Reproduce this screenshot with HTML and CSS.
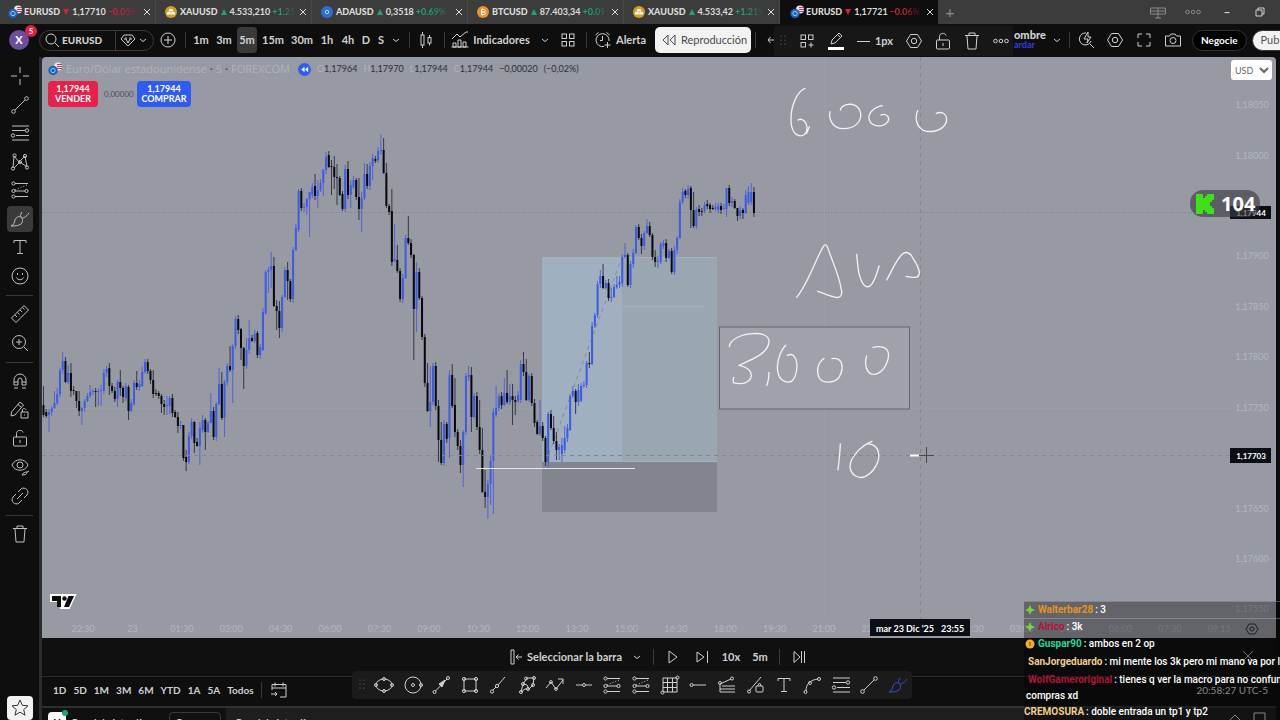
FILE: index.html
```html
<!DOCTYPE html>
<html lang="es">
<head>
    <meta charset="UTF-8">
    <meta name="viewport" content="width=device-width, initial-scale=1.0">
    <title>EURUSD 1,17721</title>
    <link rel="stylesheet" href="styles.css">
</head>
<body>
    <!-- icons -->
    <svg class="sprite" aria-hidden="true">
        <symbol id="i-cross" viewBox="0 0 20 20"><path d="M10 1v6M10 13v6M1 10h6M13 10h6"/></symbol>
        <symbol id="i-line" viewBox="0 0 20 20"><circle cx="3.500" cy="16.500" r="1.800"/><circle cx="16.500" cy="3.500" r="1.800"/><path d="M5 15L15 5"/></symbol>
        <symbol id="i-fib" viewBox="0 0 20 20"><path d="M2 3h17M2 7.500h13M6 12.500h13M2 17h17"/><circle cx="17" cy="7.500" r="1.700"/><circle cx="3" cy="12.500" r="1.700"/></symbol>
        <symbol id="i-pattern" viewBox="0 0 20 20"><path d="M3 16L4 4l5 6 6-6 2 11-7-5-6 6"/><circle cx="3" cy="16.500" r="1.600"/><circle cx="4.500" cy="3.500" r="1.600"/><circle cx="10" cy="10" r="1.500"/><circle cx="15" cy="4" r="1.600"/><circle cx="17" cy="15.500" r="1.600"/></symbol>
        <symbol id="i-proj" viewBox="0 0 20 20"><path d="M5 3.500h13M5 11h10M5 16.500h13"/><path stroke-dasharray="1 2" d="M5 10l12-5"/><circle cx="3.500" cy="3.500" r="1.600"/><circle cx="3.500" cy="11" r="1.600"/><circle cx="3.500" cy="16.500" r="1.600"/><circle cx="16.500" cy="11" r="1.600"/></symbol>
        <symbol id="i-brush" viewBox="0 0 20 20"><path d="M1 17c3-1 3-3 4-6 1-3 4-4 6-3 2 2 2 5 0 7-3 2-6 2-10 2zM11 8c-1-2 0-4 1-5M12 9c2 0 4-1 7-5"/></symbol>
        <symbol id="i-text" viewBox="0 0 20 20"><path d="M4 6V3.500h12V6M10 3.500v13M7 16.500h6"/></symbol>
        <symbol id="i-smile" viewBox="0 0 20 20"><circle cx="10" cy="10" r="8"/><path d="M6.500 11.500c1 3 6 3 7 0M7.500 7v2M12.500 7v2"/></symbol>
        <symbol id="i-ruler" viewBox="0 0 20 20"><path d="M1.500 14L14 1.500l4.500 4.500L6 18.500zM5 11l2 2M7.500 8.500l2 2M10 6l2 2M12.500 3.500l2 2"/></symbol>
        <symbol id="i-zoom" viewBox="0 0 20 20"><circle cx="9" cy="9" r="6.500"/><path d="M9 6v6M6 9h6M14 14l4 4"/></symbol>
        <symbol id="i-magnet" viewBox="0 0 20 20"><path d="M4 14V9a6 6 0 0 1 12 0v5h-4V9a2 2 0 0 0-4 0v5zM4 11h4M12 11h4M5 16v2M7 16v2M13 16v2M15 16v2"/></symbol>
        <symbol id="i-penlock" viewBox="0 0 20 20"><path d="M1.500 12L10 2l3.500 3L5 15l-4 1zM8 4.500l3.500 3M11 12h7v6h-7zM12.500 12v-2c0-2 3-2 3.500 0M14.500 14.500v1"/></symbol>
        <symbol id="i-lock" viewBox="0 0 20 20"><rect x="3.500" y="9" width="13" height="9" rx="1"/><path d="M6.500 9V5.500c0-4 6-4 6.500-1M10 12v3"/></symbol>
        <symbol id="i-eye" viewBox="0 0 20 20"><path d="M2 8c3-7 13-7 16 0-3 7-13 7-16 0z"/><circle cx="10" cy="8" r="3"/><path d="M12 18c2 0 5 0 5-3l2-1M12 18c1-2 3-3 5-3"/></symbol>
        <symbol id="i-link" viewBox="0 0 20 20"><path d="M8 6l3-3c4-3 9 2 6 6l-3 3M12 14l-3 3c-4 3-9-2-6-6l3-3M7 13l6-6"/></symbol>
        <symbol id="i-trash" viewBox="0 0 20 20"><path d="M3 4.500h14M7 4V2h6v2M5 5l1 13h8l1-13"/></symbol>
        <symbol id="i-star" viewBox="0 0 20 20"><path d="M10 2l2.300 5.300 5.700.5-4.300 3.800 1.300 5.600-5-3-5 3 1.300-5.600L2 7.800l5.700-.5z"/></symbol>
        <symbol id="i-plus" viewBox="0 0 20 20"><circle cx="10" cy="10" r="7"/><path d="M10 6v8M6 10h8"/></symbol>
        <symbol id="i-search" viewBox="0 0 20 20"><circle cx="9" cy="9" r="5"/><path d="M12.500 12.500L17 17"/></symbol>
        <symbol id="i-gem" viewBox="0 0 20 20"><path d="M6 5h8l3 4-7 7-7-7zM6 9l2 0 2 4 2-4 2 0M8 7v2M12 7v2"/></symbol>
        <symbol id="i-chev" viewBox="0 0 10 10"><path d="M2 4l3 2.500L8 4"/></symbol>
        <symbol id="i-candles" viewBox="0 0 20 20"><path d="M6.500 2v3M6.500 15v3M13.500 5v2.500M13.500 13v2.500"/><rect x="5" y="5" width="3" height="10"/><rect x="12" y="7.500" width="3" height="5.500"/></symbol>
        <symbol id="i-indic" viewBox="0 0 20 20"><path d="M3 17v-4h3v4zM8 17v-7h3v7zM13 17v-5h3v5zM1.500 17h17M2 9l5-5 3 3 6-5h2"/></symbol>
        <symbol id="i-grid" viewBox="0 0 20 20"><rect x="4" y="4" width="4.500" height="4.500"/><rect x="11.500" y="4" width="4.500" height="4.500"/><rect x="4" y="11.500" width="4.500" height="4.500"/><rect x="11.500" y="11.500" width="4.500" height="4.500"/></symbol>
        <symbol id="i-gridplus" viewBox="0 0 20 20"><rect x="4" y="4" width="4.500" height="4.500"/><rect x="11.500" y="4" width="4.500" height="4.500"/><rect x="4" y="11.500" width="4.500" height="4.500"/><path d="M14 11.500v5M11.500 14h5"/></symbol>
        <symbol id="i-alarm" viewBox="0 0 20 20"><path d="M11 16.500A6.500 6.500 0 1 1 16 11M9.500 6v4.500H7M2.500 5l3-2.500M13.500 2.500l3 2.500M14.500 12v6M11.500 15h6"/></symbol>
        <symbol id="i-rewind" viewBox="0 0 20 20"><path d="M9 5v10l-5-5zM16 5v10l-5-5z"/></symbol>
        <symbol id="i-back" viewBox="0 0 10 10"><path d="M4.500 2L2 5l2.500 3M2 5h7"/></symbol>
        <symbol id="i-drag" viewBox="0 0 10 14"><path stroke-dasharray="1.500 2.500" d="M3 1.500v12M7 1.500v12"/></symbol>
        <symbol id="i-pencil" viewBox="0 0 20 20"><path d="M5 13l1-4 7-7 3 3-7 7zM12 4l3 3"/><path class="thick" d="M2 17.500h16"/></symbol>
        <symbol id="i-hex" viewBox="0 0 20 20"><path d="M6.500 3.500h7l4 6.500-4 6.500h-7L2.500 10z"/><circle cx="10" cy="10" r="2.700"/></symbol>
        <symbol id="i-more" viewBox="0 0 20 20"><circle cx="4.500" cy="10" r="1.800"/><circle cx="10" cy="10" r="1.800"/><circle cx="15.500" cy="10" r="1.800"/></symbol>
        <symbol id="i-flash" viewBox="0 0 20 20"><path d="M10 3a6 6 0 1 0 5 8M14 14l4 4M12 2L8 9h4l-1 4 4-6h-3z"/></symbol>
        <symbol id="i-full" viewBox="0 0 20 20"><path d="M4 8V4h4M12 4h4v4M16 12v4h-4M8 16H4v-4"/></symbol>
        <symbol id="i-camera" viewBox="0 0 20 20"><path d="M2.500 6h4l1.500-2h4l1.500 2h4v10h-15z"/><circle cx="10" cy="10.500" r="3"/></symbol>
        <symbol id="i-screens" viewBox="0 0 20 20"><path d="M2.500 6h15v6h-15zM10 6v10M7 16h6M2.500 9h15"/></symbol>
        <symbol id="i-bar" viewBox="0 0 14 16"><path d="M2 1h3v14H2zM7 8h6M9.500 5.500L7 8l2.500 2.500"/></symbol>
        <symbol id="i-play" viewBox="0 0 20 20"><path d="M6 4v12l8-6z"/></symbol>
        <symbol id="i-step" viewBox="0 0 20 20"><path d="M5 5v10l7-5zM15.500 4v12"/></symbol>
        <symbol id="i-end" viewBox="0 0 20 20"><path d="M5 4.500v11l6-5.500zM12.500 4v12M15.500 4v12"/></symbol>
        <symbol id="i-cal" viewBox="0 0 20 20"><path d="M3 10V4.500h14V17H11M3 8h14M6 2.500v4M14 2.500v4M2 14h6M6 12l2 2-2 2"/></symbol>
        <symbol id="i-ellipse" viewBox="0 0 20 20"><ellipse cx="10" cy="10" rx="8" ry="6"/><circle cx="2" cy="10" r="1.500"/><circle cx="18" cy="10" r="1.500"/><circle cx="10" cy="4" r="1.500"/><circle cx="10" cy="16" r="1.500"/></symbol>
        <symbol id="i-circle" viewBox="0 0 20 20"><circle cx="10" cy="10" r="8"/><circle cx="10" cy="10" r="1.500"/><circle cx="18" cy="10" r="1.500"/></symbol>
        <symbol id="i-arrow" viewBox="0 0 20 20"><circle cx="3.500" cy="17" r="1.500"/><circle cx="17" cy="3" r="1.500"/><path d="M4.500 16L16 4"/><path class="solid" d="M14 5l-6 4 3 3z"/></symbol>
        <symbol id="i-rect" viewBox="0 0 20 20"><path d="M4 4h12v12H4z"/><circle cx="4" cy="4" r="1.600"/><circle cx="16" cy="4" r="1.600"/><circle cx="4" cy="16" r="1.600"/><circle cx="16" cy="16" r="1.600"/></symbol>
        <symbol id="i-ray" viewBox="0 0 20 20"><circle cx="4" cy="16.500" r="1.600"/><circle cx="9" cy="11" r="1.600"/><path d="M5 15l3-3M10 10l7-8"/></symbol>
        <symbol id="i-poly" viewBox="0 0 20 20"><path d="M4 17l2-8 4 1 2 4-4 0-4 3M6 9l4-6 7 0-1 7-4 4"/><circle cx="4" cy="17" r="1.500"/><circle cx="6" cy="9" r="1.500"/><circle cx="9" cy="3.500" r="1.500"/><circle cx="17" cy="3" r="1.500"/><circle cx="16" cy="10" r="1.500"/><circle cx="11" cy="14" r="1.500"/></symbol>
        <symbol id="i-zigzag" viewBox="0 0 20 20"><path d="M1 13l5-6 5 7 7-9M13 4h5v5"/><circle cx="6" cy="7" r="1.400"/><circle cx="11" cy="14" r="1.400"/></symbol>
        <symbol id="i-hline" viewBox="0 0 20 20"><path d="M2 10h6.500M11.500 10H18"/><circle cx="10" cy="10" r="1.500"/></symbol>
        <symbol id="i-gann" viewBox="0 0 20 20"><path d="M3 3h14v14H3zM7.500 3v14M12.500 3v14M3 7.500h14M3 12.500h14"/><circle cx="2.500" cy="17.500" r="1.500"/><circle cx="17.500" cy="2.500" r="1.500"/></symbol>
        <symbol id="i-hray" viewBox="0 0 20 20"><path d="M5 10h13"/><circle cx="3.500" cy="10" r="1.500"/></symbol>
        <symbol id="i-fan" viewBox="0 0 20 20"><path d="M3 9l11-5M3 9v8M5 11h13M3 14h15M3 17h15"/><circle cx="3" cy="8" r="1.500"/><circle cx="15" cy="3.500" r="1.500"/></symbol>
        <symbol id="i-lineshape" viewBox="0 0 20 20"><path d="M4 16L16 2"/><circle cx="4" cy="16.500" r="1.500"/><rect x="11" y="11" width="7" height="6" rx="1"/><path d="M12.500 11l2-3 2 3"/></symbol>
        <symbol id="i-arc" viewBox="0 0 20 20"><path d="M4 16c0-7 4-11 12-12"/><circle cx="3.500" cy="17" r="1.500"/><circle cx="8" cy="8" r="1.500"/><circle cx="17" cy="4" r="1.500"/></symbol>
        <symbol id="f-eu" viewBox="0 0 14 14"><g stroke="none"><circle cx="10" cy="4.500" r="4" fill="#e8e8f0"/><path fill="#c23b50" d="M9 2h5v1H9zM9 4h5v1H9zM9 6h5v1H9z"/><circle cx="5" cy="8.500" r="4.700" fill="#1d62b5"/></g><circle cx="5" cy="8.500" r="2.200" stroke="#8ecbff"/></symbol>
        <symbol id="f-gold" viewBox="0 0 14 14"><g stroke="none"><circle cx="7" cy="7" r="6" fill="#d3a021"/><path fill="#fff" d="M5.500 4h3l1 2.500h-5zM3.500 7h3l.5 2.500H2.500zM7.500 7h3l1 2.500H7z"/></g></symbol>
        <symbol id="f-ada" viewBox="0 0 14 14"><circle cx="7" cy="7" r="6" fill="#2a6fd6" stroke="none"/><circle cx="7" cy="7" r="1.700" stroke="#bcd6ff"/></symbol>
        <symbol id="f-btc" viewBox="0 0 14 14"><circle cx="7" cy="7" r="6" fill="#f0902a" stroke="none"/><path stroke="#fff" d="M5.500 4.500h2c2 0 2 2.500 0 2.500h-2zM5.500 7h2.500c2 0 2 2.500 0 2.500H5.500zM6.500 3.500v1M6.500 9.500v1"/></symbol>
    </svg>

    <!-- tabs -->
    <header class="tabs">
        <div class="tab"><svg class="flag"><use href="#f-eu"/></svg><b>EURUSD</b><svg class="tri down" viewBox="0 0 8 8"><path d="M1 1h6L4 7z"/></svg><span>1,17710</span><em class="down">−0.05%</em><button aria-label="Cerrar"><svg class="x" viewBox="0 0 8 8"><path d="M1 1l6 6M7 1L1 7"/></svg></button></div>
        <div class="tab"><svg class="flag"><use href="#f-gold"/></svg><b>XAUUSD</b><svg class="tri up" viewBox="0 0 8 8"><path d="M4 1l3 6H1z"/></svg><span>4.533,210</span><em class="up">+1.25%</em><button aria-label="Cerrar"><svg class="x" viewBox="0 0 8 8"><path d="M1 1l6 6M7 1L1 7"/></svg></button></div>
        <div class="tab"><svg class="flag"><use href="#f-ada"/></svg><b>ADAUSD</b><svg class="tri up" viewBox="0 0 8 8"><path d="M4 1l3 6H1z"/></svg><span>0,3518</span><em class="up">+0.69% /</em><button aria-label="Cerrar"><svg class="x" viewBox="0 0 8 8"><path d="M1 1l6 6M7 1L1 7"/></svg></button></div>
        <div class="tab"><svg class="flag"><use href="#f-btc"/></svg><b>BTCUSD</b><svg class="tri up" viewBox="0 0 8 8"><path d="M4 1l3 6H1z"/></svg><span>87.403,34</span><em class="up">+0.09%</em><button aria-label="Cerrar"><svg class="x" viewBox="0 0 8 8"><path d="M1 1l6 6M7 1L1 7"/></svg></button></div>
        <div class="tab"><svg class="flag"><use href="#f-gold"/></svg><b>XAUUSD</b><svg class="tri up" viewBox="0 0 8 8"><path d="M4 1l3 6H1z"/></svg><span>4.533,42</span><em class="up">+1.21%</em><button aria-label="Cerrar"><svg class="x" viewBox="0 0 8 8"><path d="M1 1l6 6M7 1L1 7"/></svg></button></div>
        <div class="tab active"><svg class="flag"><use href="#f-eu"/></svg><b>EURUSD</b><svg class="tri down" viewBox="0 0 8 8"><path d="M1 1h6L4 7z"/></svg><span>1,17721</span><em class="down">−0.06%</em><button aria-label="Cerrar"><svg class="x" viewBox="0 0 8 8"><path d="M1 1l6 6M7 1L1 7"/></svg></button></div>
        <button class="newtab" aria-label="Nueva pestaña">+</button>
        <div class="window">
            <svg class="ico dim"><use href="#i-screens"/></svg>
            <svg class="ico dim"><use href="#i-more"/></svg>
            <button aria-label="Minimizar">−</button>
            <button aria-label="Restaurar"><svg class="restore" viewBox="0 0 10 10"><path d="M1 3h6v6H1zM3 3V1h6v6H7"/></svg></button>
        </div>
    </header>

    <!-- toolbar -->
    <nav class="toolbar">
        <button class="avatar">X<span>5</span></button>
        <div class="search">
            <button><svg class="ico"><use href="#i-search"/></svg><b>EURUSD</b></button>
            <button class="gem" aria-label="Lista"><svg class="ico"><use href="#i-gem"/></svg><svg class="chev"><use href="#i-chev"/></svg></button>
        </div>
        <button class="tool" aria-label="Comparar"><svg class="ico"><use href="#i-plus"/></svg></button>
        <div class="sep first"></div>
        <div class="intervals">
            <button>1m</button>
            <button>3m</button>
            <button class="on">5m</button>
            <button class="wide">15m</button>
            <button class="wide">30m</button>
            <button class="slim">1h</button>
            <button class="slim">4h</button>
            <button class="one">D</button>
            <button class="one">S</button>
            <button class="one" aria-label="Más"><svg class="chev"><use href="#i-chev"/></svg></button>
        </div>
        <div class="sep"></div>
        <button class="tool candle" aria-label="Velas"><svg class="ico"><use href="#i-candles"/></svg></button>
        <div class="sep"></div>
        <button class="indic"><svg class="ico"><use href="#i-indic"/></svg>Indicadores</button>
        <button class="tool slim" aria-label="Favoritos"><svg class="chev"><use href="#i-chev"/></svg></button>
        <button class="tool layout" aria-label="Plantillas"><svg class="ico"><use href="#i-grid"/></svg></button>
        <div class="sep"></div>
        <button class="alert"><svg class="ico"><use href="#i-alarm"/></svg>Alerta</button>
        <button class="replaybtn"><svg class="ico"><use href="#i-rewind"/></svg>Reproducción</button>
        <div class="sep"></div>
        <button class="tool slim undo" aria-label="Deshacer"><svg class="chev"><use href="#i-back"/></svg></button>

        <div class="right">
            <button class="name"><b>ombre</b><small>ardar</small></button>
            <button class="tool slim" aria-label="Diseños"><svg class="chev"><use href="#i-chev"/></svg></button>
            <div class="sep"></div>
            <button class="tool" aria-label="Búsqueda rápida"><svg class="ico"><use href="#i-flash"/></svg></button>
            <button class="tool" aria-label="Ajustes"><svg class="ico"><use href="#i-hex"/></svg></button>
            <button class="tool" aria-label="Pantalla completa"><svg class="ico"><use href="#i-full"/></svg></button>
            <button class="tool" aria-label="Captura"><svg class="ico"><use href="#i-camera"/></svg></button>
            <button class="pill">Negocie</button>
            <button class="pill white">Publicar</button>
        </div>

        <!-- floating properties of the drawing -->
        <div class="props">
            <svg class="drag"><use href="#i-drag"/></svg>
            <button aria-label="Plantilla"><svg class="ico"><use href="#i-gridplus"/></svg></button>
            <button aria-label="Color"><svg class="ico"><use href="#i-pencil"/></svg></button>
            <button class="width">1px</button>
            <button aria-label="Ajustes"><svg class="ico"><use href="#i-hex"/></svg></button>
            <button aria-label="Bloquear"><svg class="ico"><use href="#i-lock"/></svg></button>
            <button aria-label="Eliminar"><svg class="ico"><use href="#i-trash"/></svg></button>
            <button aria-label="Más"><svg class="ico"><use href="#i-more"/></svg></button>
        </div>
    </nav>

    <div class="body">
        <aside class="side">
            <div class="g8">
                <button aria-label="Cursor"><svg class="ico"><use href="#i-cross"/></svg></button>
                <button aria-label="Línea"><svg class="ico"><use href="#i-line"/></svg></button>
                <button aria-label="Fibonacci"><svg class="ico"><use href="#i-fib"/></svg></button>
                <button aria-label="Patrones"><svg class="ico"><use href="#i-pattern"/></svg></button>
                <button aria-label="Proyección"><svg class="ico"><use href="#i-proj"/></svg></button>
                <button class="on" aria-label="Pincel"><svg class="ico"><use href="#i-brush"/></svg></button>
                <button aria-label="Texto"><svg class="ico"><use href="#i-text"/></svg></button>
                <button aria-label="Emoji"><svg class="ico"><use href="#i-smile"/></svg></button>
            </div>
            <hr>
            <div class="g2">
                <button aria-label="Medir"><svg class="ico"><use href="#i-ruler"/></svg></button>
                <button aria-label="Acercar"><svg class="ico"><use href="#i-zoom"/></svg></button>
            </div>
            <hr>
            <div class="g5">
                <button aria-label="Imán"><svg class="ico"><use href="#i-magnet"/></svg></button>
                <button aria-label="Modo dibujo"><svg class="ico"><use href="#i-penlock"/></svg></button>
                <button aria-label="Bloquear"><svg class="ico"><use href="#i-lock"/></svg></button>
                <button aria-label="Ocultar"><svg class="ico"><use href="#i-eye"/></svg></button>
                <button aria-label="Enlazar"><svg class="ico"><use href="#i-link"/></svg></button>
            </div>
            <hr>
            <div class="g1">
                <button aria-label="Eliminar"><svg class="ico"><use href="#i-trash"/></svg></button>
            </div>
            <button class="fav" aria-label="Favoritos"><svg class="ico"><use href="#i-star"/></svg></button>
        </aside>

        <main>
            <section class="chart">
                <svg class="plot" viewBox="42 57 1234 581" preserveAspectRatio="xMidYMid slice">
                    <g class="gridlines">
                        <path d="M824.500 57v563M42 408.500h1190"/>
                    </g>
                    <g class="position">
                        <rect class="target" x="542" y="257" width="175" height="205"/>
                        <rect class="reached" x="542" y="257" width="80" height="205"/>
                        <rect class="stop" x="542" y="462" width="175" height="50"/>
                        <path class="edge" d="M542 257.500h175M622 306.500h82M542 461.500h175"/>
                        <path class="trend" d="M546 462L622 257"/>
                    </g>
                    <path class="price" d="M42 212.500h1190"/>
                    <g id="candles"></g>
                    <path class="level" d="M476 468.500h159"/>
                    <rect class="note" x="719.500" y="327" width="190" height="82"/>
                    <!-- brush strokes -->
                    <g class="ink" transform="translate(700 70) scale(.3333)">
                        <path d="M315 55C290 65 272 110 273 150C273 185 290 200 305 197C320 195 325 175 318 160C312 148 302 145 294 150M328 170L320 190"/>
                        <path d="M390 125C385 150 400 176 430 176C465 176 485 155 482 130C478 105 455 100 440 104C430 107 423 112 421 120"/>
                        <path d="M547 107C520 112 505 130 507 145C510 165 530 170 545 167C562 163 570 150 564 140C560 133 552 132 543 135"/>
                        <path d="M653 122C643 145 650 170 670 181C690 188 715 185 730 170C745 155 742 135 728 129C720 126 715 127 709 130"/>
                        <path d="M290 682C325 640 350 560 370 530C374 523 378 523 382 530C395 570 420 620 425 665C426 680 418 684 408 682C385 678 370 668 353 664"/>
                        <path d="M470 553C474 590 475 625 492 645C500 653 508 652 515 643C528 625 532 605 537 588"/>
                        <path d="M560 630C580 595 590 565 610 550C620 545 628 548 635 558C645 575 657 590 658 608C658 622 648 626 618 619"/>
                        <path d="M88 830C90 810 120 792 165 790C200 790 212 805 205 825C195 855 150 870 118 886C135 890 155 900 154 918C150 940 125 945 100 938C99 932 100 928 101 922"/>
                        <path d="M207 907C207 925 205 935 201 946"/>
                        <path d="M257 826C235 850 228 890 235 912C242 935 265 942 277 932C292 915 294 880 286 865C280 853 270 852 262 856"/>
                        <path d="M372 865C352 880 348 905 358 925C370 940 400 940 415 925C432 900 428 875 415 868C408 865 402 865 396 866"/>
                        <path d="M500 858C492 885 500 905 513 912C530 917 550 905 560 880C570 855 567 838 550 832C540 829 530 829 519 832"/>
                        <path d="M421 1122C420 1150 417 1175 414 1200"/>
                        <path d="M516 1114C480 1128 450 1165 450 1190C452 1215 475 1228 495 1220C525 1205 540 1170 536 1150C532 1128 515 1120 500 1122"/>
                    </g>
                    <path class="hair" d="M42 455.500h1190M920.500 57v563"/>
                    <path class="dash" d="M910 455.500h9"/>
                    <path class="cursor" d="M919 455.500h15M926.500 447v16"/>
                    <g id="times" class="axis"></g>
                    <g id="prices" class="axis"></g>
                    <rect class="tag" x="1230" y="206" width="41" height="13"/>
                    <text class="tagtext" x="1251" y="216">1,17944</text>
                    <rect class="tag" x="1230" y="448" width="41" height="15"/>
                    <text class="tagtext" x="1251" y="459">1,17703</text>
                    <rect class="tag" x="870" y="619" width="100" height="17"/>
                    <text class="datetext" x="876" y="632">mar 23 Dic '25</text>
                    <text class="datetext" x="941" y="632">23:55</text>
                    <g class="logo" transform="translate(50 594)">
                        <path d="M1 1h24l-6 13H11V7H1z"/>
                        <path class="mark" d="M2 2h9v11H7V7H2zM18.500 2H24l-5 11h-5z"/>
                        <circle class="mark" cx="14.500" cy="4.500" r="2.200"/>
                    </g>
                    <g class="target-ico"><path d="M1249 624h6l3 5-3 5h-6l-3-5z"/><circle cx="1252" cy="629" r="2"/></g>
                </svg>

                <div class="legend">
                    <svg class="flag"><use href="#f-eu"/></svg>
                    <span class="title">Euro/Dólar estadounidense <i>·</i> 5 <i>·</i> FOREXCOM</span>
                    <svg class="rew" viewBox="0 0 14 14"><circle cx="7" cy="7" r="7"/><path d="M7 4v6L3.500 7zM11 4v6L7.500 7z"/></svg>
                    <span><i>O</i>1,17964</span>
                    <span><i>H</i>1,17970</span>
                    <span><i>L</i>1,17944</span>
                    <span><i>C</i>1,17944</span>
                    <span>−0,00020</span>
                    <span>(−0,02%)</span>
                </div>
                <div class="deal">
                    <button class="sell">1,17944<br>VENDER</button>
                    <span>0,00000</span>
                    <button class="buy">1,17944<br>COMPRAR</button>
                </div>
                <select class="currency" aria-label="Moneda"><option>USD</option></select>
                <div class="kick">
                    <svg viewBox="0 0 18 20"><path d="M0 0h7v4h2V2h2V0h7v6h-2v2h-2v4h2v2h2v6h-7v-2H9v-2H7v4H0z"/></svg>104
                </div>
            </section>

            <div class="replay">
                <button class="pick"><svg class="bar"><use href="#i-bar"/></svg>Seleccionar la barra<svg class="chev"><use href="#i-chev"/></svg></button>
                <div class="sep"></div>
                <button aria-label="Reproducir"><svg class="ico"><use href="#i-play"/></svg></button>
                <button aria-label="Avanzar"><svg class="ico"><use href="#i-step"/></svg></button>
                <button>10x</button>
                <button>5m</button>
                <div class="sep"></div>
                <button aria-label="Ir al final"><svg class="ico"><use href="#i-end"/></svg></button>
                <button class="close" aria-label="Cerrar"><svg viewBox="0 0 12 12"><path d="M1 1l10 10M11 1L1 11"/></svg></button>
            </div>

            <div class="ranges">
                <button>1D</button>
                <button>5D</button>
                <button>1M</button>
                <button>3M</button>
                <button>6M</button>
                <button>YTD</button>
                <button>1A</button>
                <button>5A</button>
                <button>Todos</button>
                <div class="sep"></div>
                <button aria-label="Ir a"><svg class="ico"><use href="#i-cal"/></svg></button>
                <time>20:58:27 UTC-5</time>

                <!-- favourite drawing tools -->
                <div class="favbar">
                    <svg class="drag"><use href="#i-drag"/></svg>
                    <div class="favs">
                        <button aria-label="Elipse"><svg class="ico"><use href="#i-ellipse"/></svg></button>
                        <button aria-label="Círculo"><svg class="ico"><use href="#i-circle"/></svg></button>
                        <button aria-label="Flecha"><svg class="ico"><use href="#i-arrow"/></svg></button>
                        <button aria-label="Rectángulo"><svg class="ico"><use href="#i-rect"/></svg></button>
                        <button aria-label="Rayo"><svg class="ico"><use href="#i-ray"/></svg></button>
                        <button aria-label="Polilínea"><svg class="ico"><use href="#i-poly"/></svg></button>
                        <button aria-label="Trayectoria"><svg class="ico"><use href="#i-zigzag"/></svg></button>
                        <button aria-label="Línea horizontal"><svg class="ico"><use href="#i-hline"/></svg></button>
                        <button aria-label="Posición larga"><svg class="ico"><use href="#i-proj"/></svg></button>
                        <button aria-label="Posición corta"><svg class="ico"><use href="#i-proj"/></svg></button>
                        <button aria-label="Caja de Gann"><svg class="ico"><use href="#i-gann"/></svg></button>
                        <button aria-label="Rayo horizontal"><svg class="ico"><use href="#i-hray"/></svg></button>
                        <button aria-label="Extensión"><svg class="ico"><use href="#i-fan"/></svg></button>
                        <button aria-label="Línea de información"><svg class="ico"><use href="#i-lineshape"/></svg></button>
                        <button aria-label="Texto"><svg class="ico"><use href="#i-text"/></svg></button>
                        <button aria-label="Arco"><svg class="ico"><use href="#i-arc"/></svg></button>
                        <button aria-label="Retroceso"><svg class="ico"><use href="#i-fib"/></svg></button>
                        <button aria-label="Línea"><svg class="ico"><use href="#i-line"/></svg></button>
                        <button class="blue" aria-label="Pincel"><svg class="ico"><use href="#i-brush"/></svg></button>
                    </div>
                </div>
            </div>

            <footer class="panels">
                <div class="panel active"><span class="app">H</span>Panel de intradía<button>Comprar</button></div>
                <div class="panel">Panel de intradía</div>
                <svg class="resize" viewBox="0 0 40 12"><path d="M2 12l5-5 5 5M26 12V5h11v7"/></svg>
            </footer>
        </main>
    </div>

    <!-- chat -->
    <div class="chat">
        <p><svg class="badge" viewBox="0 0 10 10"><path fill="#7fd13b" d="M5 0l1.500 3.500L10 5 6.500 6.500 5 10 3.500 6.500 0 5l3.500-1.500z"/></svg><b class="orange">Walterbar28</b> : 3</p>
        <p><svg class="badge" viewBox="0 0 10 10"><path fill="#7fd13b" d="M5 0l1.500 3.500L10 5 6.500 6.500 5 10 3.500 6.500 0 5l3.500-1.500z"/></svg><b class="crimson">Alrico</b> : 3k</p>
        <p><svg class="badge" viewBox="0 0 10 10"><circle cx="5" cy="5" r="4.500" fill="#f0b020"/><path stroke="#7a4a00" fill="none" d="M4 4l1-1v4"/></svg><b class="teal">Guspar90</b> : ambos en 2 op</p>
        <p class="plain"><b class="sand">SanJorgeduardo</b> : mi mente los 3k pero mi mano va por los</p>
        <p class="plain"><b class="crimson">WolfGameroriginal</b> : tienes q ver la macro para no confundir</p>
        <p class="cont">compras xd</p>
        <p class="cut"><b class="sand">CREMOSURA</b> : doble entrada un tp1 y tp2</p>
    </div>

    <script src="script.js"></script>
</body>
</html>
```
FILE: styles.css
```css
* {
    margin: 0;
    padding: 0;
    box-sizing: border-box;
}

body {
    height: 100vh;
    display: flex;
    flex-direction: column;
    overflow: hidden;
    position: relative;
    background: #0e0e0e;
    color: #d0d0d0;
    font: 700 11px/14px Lato, "Open Sans", sans-serif;
}

button,
select {
    font: inherit;
    color: inherit;
    border: 0;
    background: none;
    white-space: nowrap;
}

button {
    display: flex;
    align-items: center;
    justify-content: center;
}

i,
em {
    font-style: normal;
}

svg {
    fill: none;
    stroke: currentColor;
    flex: none;
}

.sprite {
    position: absolute;
    width: 0;
    height: 0;
}

.ico {
    width: 20px;
    height: 20px;
}

.chev {
    width: 10px;
    height: 10px;
}

.thick {
    stroke: #fff;
    stroke-width: 3;
}

.solid {
    fill: currentColor;
}

.sep {
    width: 1px;
    height: 16px;
    background: #3a3a3a;
    flex: none;
}

/* tabs */
.tabs {
    flex: none;
    height: 24px;
    display: flex;
    background: #3c3c3c;
}

.tab {
    width: 156px;
    flex: none;
    display: flex;
    align-items: center;
    gap: 2px;
    padding: 0 3px 0 8px;
    border-right: 1px solid #484848;
    font-size: 9px;
    color: #dcdcdc;
}

.tab.active {
    width: 158px;
    padding-left: 10px;
    background: #0e0e0e;
    border-right: 0;
}

.tri {
    width: 8px;
    height: 8px;
    stroke: none;
    fill: currentColor;
}

.tab em {
    flex: 1;
    width: 0;
    overflow: hidden;
    white-space: nowrap;
    -webkit-mask-image: linear-gradient(90deg, #000 40%, transparent);
    mask-image: linear-gradient(90deg, #000 40%, transparent);
}

.tab button {
    width: 10px;
}

.x {
    width: 8px;
    height: 8px;
}

.flag {
    width: 14px;
    height: 14px;
}

.up {
    color: #22a078;
}

.down {
    color: #d0213f;
}

.newtab {
    width: 24px;
    font-size: 16px;
    font-weight: 400;
    color: #8a8a8a;
}

.window {
    margin-left: auto;
    display: flex;
    align-items: center;
    gap: 15px;
    padding-right: 11px;
}

.window button {
    width: 18px;
}

.restore {
    width: 10px;
    height: 10px;
}

.dim {
    color: #8a8a8a;
}

/* toolbar */
.toolbar {
    flex: none;
    height: 33px;
    display: flex;
    align-items: center;
    position: relative;
    padding: 0 0 1px 9px;
}

.avatar {
    width: 20px;
    height: 20px;
    border-radius: 50%;
    background: #6b4f9c;
    color: #fff;
    position: relative;
}

.avatar span {
    position: absolute;
    right: -8px;
    top: -5px;
    width: 12px;
    height: 12px;
    border-radius: 50%;
    background: #e01f45;
    font-size: 8px;
    line-height: 12px;
}

.search {
    width: 115px;
    height: 21px;
    margin: 0 4px 0 10px;
    display: flex;
    border: 1px solid #3a3a3a;
    border-radius: 11px;
}

.search button {
    width: 75px;
    justify-content: flex-start;
    padding-left: 2px;
    font-size: 10px;
}

.search .gem {
    width: 38px;
    border-left: 1px solid #3a3a3a;
}

.tool {
    width: 20px;
    height: 26px;
}

.tool.slim {
    width: 14px;
}

.first {
    margin-left: 7px;
}

.intervals {
    display: flex;
    gap: 3px;
    margin: 0 7px 0 5px;
}

.intervals button {
    width: 20px;
    height: 26px;
    border-radius: 4px;
}

.intervals .on {
    background: #3a3a3a;
}

.intervals .wide {
    width: 26px;
}

.intervals .slim {
    width: 18px;
}

.intervals .one {
    width: 12px;
}

.tool.candle {
    margin: 0 8px 0 6px;
}

.indic,
.alert {
    gap: 3px;
    margin: 0 9px 0 6px;
}

.indic {
    width: 78px;
}

.alert {
    width: 53px;
}

.tool.layout {
    margin: 0 8px 0 6px;
}

.replaybtn {
    height: 26px;
    width: 96px;
    gap: 2px;
    border-radius: 5px;
    background: #f2f2f2;
    color: #4a4a4a;
    font-weight: 400;
    margin-right: 4px;
}

.tool.undo {
    margin-left: 8px;
}

.right {
    display: flex;
    align-items: center;
    width: 266px;
    overflow: hidden;
    position: absolute;
    right: 0;
    top: 0;
    height: 32px;
}

.right .name {
    width: 36px;
    flex: none;
    flex-direction: column;
    align-items: flex-start;
    line-height: 10px;
}

.name small {
    font-size: 9px;
    color: #2f3fe8;
}

.right .sep {
    margin: 0 6px 0 5px;
}

.right .tool {
    flex: none;
    margin-right: 9px;
}

.right .slim {
    margin-right: 0;
}

.pill {
    flex: none;
    height: 21px;
    padding: 0 8px;
    border: 1px solid #333;
    border-radius: 11px;
    background: #000;
    color: #fff;
    font-size: 10px;
    margin-right: 5px;
}

.pill.white {
    background: #f2f2f2;
    color: #555;
    font-size: 11px;
    font-weight: 400;
}

.props {
    position: absolute;
    right: 267px;
    top: 2px;
    width: 239px;
    height: 30px;
    display: flex;
    align-items: center;
    gap: 9px;
    padding-left: 4px;
    background: #171717;
}

.props .width {
    gap: 5px;
    width: 40px;
}

.props .width::before {
    content: "";
    width: 13px;
    height: 1px;
    background: #d0d0d0;
}

.drag {
    width: 10px;
    height: 14px;
    color: #555;
}

/* left tools */
.body {
    flex: 1;
    min-height: 0;
    display: flex;
    padding-right: 4px;
}

.side {
    width: 42px;
    flex: none;
    display: flex;
    flex-direction: column;
    align-items: center;
    padding: 5px 0 0;
    border-right: 3px solid #2b2d2c;
    color: #c0c0c0;
}

.side div {
    display: grid;
    align-items: center;
}

.g8 {
    height: 228px;
}

.g2 {
    height: 57px;
}

.g5 {
    height: 143px;
}

.g1 {
    height: 28px;
}

.side hr {
    width: 27px;
    border: 0;
    border-top: 1px solid #3a3a3a;
    margin: 5px 0 4px;
}

.side button {
    width: 26px;
    height: 26px;
    border-radius: 4px;
}

.side .on {
    background: #3a3a3a;
}

.side .fav {
    margin-top: auto;
    height: 24px;
    background: #f2f2f2;
    color: #333;
}

main {
    flex: 1;
    min-width: 0;
    display: flex;
    flex-direction: column;
}

/* chart */
.chart {
    flex: 1;
    min-height: 0;
    position: relative;
    background: #979aa3;
    border-radius: 4px 4px 0 0;
    overflow: hidden;
}

.plot {
    display: block;
    width: 100%;
    height: 100%;
    position: absolute;
    stroke: none;
}

.gridlines {
    stroke: #9b9ea7;
}

.target {
    fill: #9aa6b2;
}

.reached {
    fill: #a1b0c0;
}

.stop {
    fill: #83858e;
}

.edge {
    stroke: #a5b1bc;
}

.trend {
    stroke: #7f8b98;
    stroke-dasharray: 4 4;
}

.price {
    stroke: #7d8089;
    stroke-dasharray: 1 2;
}

.bull {
    fill: #3a5ce8;
}

.bear {
    fill: #08090f;
}

.bull.wick {
    fill: #5560dc;
}

.bear.wick {
    fill: #353842;
}

.level {
    stroke: #e4e5e9;
}

.note {
    fill: #a0a2ab;
    stroke: #62656f;
}

.ink {
    stroke: #f2f2f5;
    stroke-width: 4;
    stroke-linecap: round;
}

.hair {
    stroke: #83868f;
    stroke-dasharray: 4 4;
}

.dash {
    stroke: #fff;
    stroke-width: 2;
}

.cursor {
    stroke: #484a52;
}

.axis {
    fill: #b4b6be;
    font-size: 9px;
    font-weight: 400;
    text-anchor: middle;
}

.tag {
    fill: #0c0e16;
}

.tagtext,
.datetext {
    fill: #fff;
    font-size: 9px;
}

.tagtext {
    font-size: 8px;
    text-anchor: middle;
}

.logo {
    fill: #fff;
    stroke: #fff;
    stroke-width: 2;
}

.logo .mark {
    fill: #0a0a0a;
    stroke: none;
}

.target-ico {
    stroke: #33353c;
}

.legend {
    position: absolute;
    left: 6px;
    top: 5px;
    display: flex;
    align-items: center;
    gap: 6px;
    color: #2c2f38;
    font-size: 9px;
    font-weight: 400;
    white-space: nowrap;
}

.legend .title {
    color: #b0b2ba;
    font-family: "Open Sans", sans-serif;
    font-size: 11px;
    margin: 0 2px 0 -2px;
}

.legend .title i {
    color: #4a4d56;
    font-weight: 700;
}

.legend span i {
    color: #b0b2ba;
}

.rew {
    width: 13px;
    height: 13px;
    fill: #2f5cf0;
    stroke: none;
}

.rew path {
    fill: #fff;
}

.deal {
    position: absolute;
    left: 6px;
    top: 24px;
    display: flex;
    align-items: center;
    gap: 6px;
    color: #4a4d56;
    font-size: 8px;
    font-weight: 400;
}

.deal button {
    width: 50px;
    height: 26px;
    border-radius: 4px;
    color: #fff;
    font-size: 9px;
    font-weight: 700;
    line-height: 10px;
}

.deal span {
    width: 27px;
}

.deal .sell {
    background: #e8204a;
}

.deal .buy {
    width: 54px;
    background: #2f5cf0;
}

.currency {
    position: absolute;
    right: 4px;
    top: 3px;
    width: 41px;
    height: 20px;
    border-radius: 3px;
    background: #fff;
    color: #666;
    font-size: 9px;
    font-weight: 400;
}

.kick {
    position: absolute;
    right: 16px;
    top: 133px;
    width: 70px;
    height: 27px;
    display: flex;
    align-items: center;
    gap: 7px;
    padding-left: 6px;
    border-radius: 13px;
    background: rgba(60, 62, 68, .65);
    color: #fff;
    font: 700 20px/27px "Noto Sans", sans-serif;
}

.kick svg {
    width: 18px;
    height: 20px;
    fill: #3fe01a;
    stroke: none;
}

/* replay controls */
.replay {
    flex: none;
    height: 38px;
    display: flex;
    align-items: center;
    justify-content: center;
    gap: 9px;
    position: relative;
    background: #101010;
}

.replay button {
    min-width: 20px;
}

.replay .pick {
    gap: 4px;
}

.pick .chev {
    margin: 0 2px 0 6px;
}

.pick .bar {
    width: 14px;
    height: 16px;
}

.replay .close {
    position: absolute;
    right: 18px;
    top: 12px;
    color: #b0b0b0;
}

.close svg {
    width: 12px;
    height: 12px;
}

/* date ranges */
.ranges {
    flex: none;
    height: 30px;
    display: flex;
    align-items: center;
    gap: 7px;
    padding: 0 8px 3px 11px;
    border-top: 1px solid #2a2a2a;
    position: relative;
    font-size: 10px;
}

.ranges time {
    margin-left: auto;
    font-size: 10px;
    font-weight: 400;
    color: #d0d0d0;
}

.favbar {
    position: absolute;
    left: 310px;
    top: -6px;
    width: 560px;
    height: 28px;
    display: flex;
    align-items: center;
    padding-left: 5px;
    border-radius: 4px;
    background: #1b1b1b;
}

.favs {
    flex: 1;
    display: grid;
    grid-template-columns: repeat(19, 1fr);
    margin-left: 3px;
}

.blue {
    color: #3a52c8;
}

/* bottom panels */
.panels {
    flex: none;
    height: 14px;
    overflow: hidden;
    display: flex;
    background: #1e1e1e;
    border-top: 2px solid #303030;
}

.panel {
    display: flex;
    align-items: center;
    height: 28px;
    padding-left: 10px;
    font-size: 10px;
}

.panel.active {
    width: 184px;
    gap: 6px;
    padding-left: 6px;
    background: #101010;
}

.panel .app {
    width: 18px;
    height: 20px;
    border-radius: 4px;
    background: #fff;
    color: #000;
    text-align: center;
    line-height: 20px;
    position: relative;
}

.app::after {
    content: "";
    position: absolute;
    right: -2px;
    top: -2px;
    width: 6px;
    height: 6px;
    border-radius: 50%;
    background: #1fa377;
}

.panel button {
    width: 52px;
    height: 20px;
    margin-left: auto;
    margin-right: 5px;
    border: 1px solid #3a3a3a;
    border-radius: 4px;
}

.resize {
    width: 40px;
    height: 12px;
    margin-left: auto;
    margin-right: 8px;
}

/* chat */
.chat {
    position: absolute;
    right: 0;
    bottom: 0;
    width: 256px;
    height: 119px;
    background: rgba(0, 0, 0, .35);
    color: #fff;
    font: 500 10px/16px Roboto, sans-serif;
    white-space: nowrap;
}

.chat p {
    height: 17px;
    display: flex;
    align-items: center;
    gap: 2px;
    padding-left: 1px;
    border-top: 1px solid rgba(200, 200, 210, .35);
    overflow: hidden;
}

.chat p:nth-child(n+3) {
    height: 18px;
    border-top: 0;
}

.chat .plain {
    padding-left: 4px;
}

.chat p.cont {
    height: 14px;
    padding-left: 2px;
}

.chat p.cut {
    padding-left: 0;
}

.badge {
    width: 10px;
    height: 10px;
    margin-right: 1px;
    stroke: none;
}

.orange {
    color: #e8921e;
}

.crimson {
    color: #b5123c;
}

.teal {
    color: #24d8a0;
}

.sand {
    color: #f0cf8a;
}
```
FILE: script.js
```js
const NS = 'http://www.w3.org/2000/svg';

//open, close, high, low (chart y coordinates), one row per 5 minute bar
const bars = [
    [405,415,386,417],[412,416],[415,412,409,432],[412,408],[408,403,391],[403,394,388],[394,370],[370,361,352],[361,382,357],[382,373,365],
    [373,391,363,397],[390,391],[391,401,391,408],[401,411,391,416],[411,408,407,425],[408,401],[401,396],[396,392,385],[392,391],[391,392,388,407],
    [392,391,388,406],[391,390,385,406],[391,373,369],[373,369,366],[368,386,363,395],[386,391],[391,399],[399,382,380,407],[382,388,370,396],[388,397,386,403],
    [398,386,383],[387,411,385,420],[411,403],[404,383,380],[383,387,371],[387,384],[386,372,366],[372,362,359],[362,371,359],[371,380],
    [380,394,370,398],[393,394],[393,396],[396,404,394,413],[404,407,400,415],[406,405,396,415],[406,398,396,414],[398,413],[412,417],[417,426,412,433],
    [426,425],[425,458,425,461],[457,462,450,471],[462,436,432],[436,422,418],[422,443,421,453],[442,446],[446,428,422,465],[430,420,415],[420,432,418,450],
    [432,423],[423,411,393,422],[411,437],[437,404],[404,384,368],[384,418,372],[418,382,380,437],[382,366],[366,370,346,372],[370,346,344,403],
    [346,319],[319,330],[329,348,328,360],[348,366,347,389],[366,350,338],[350,338,320],[338,341],[341,334],[333,355],[355,347],
    [350,312],[313,272],[272,270,267,293],[270,266,252,288],[266,306,257],[306,311,300,330],[311,328,301,338],[328,297],[297,270],[270,281,262,300],
    [281,299],[299,250],[250,228],[230,191],[191,208],[208,207],[207,199,198,215],[199,192,192,237],[195,187],[186,196,174],
    [196,190,180,208],[190,183],[183,170,169,196],[170,157,152],[155,167],[166,167,160,195],[167,177,156,189],[177,178,164,205],[178,195],[194,209],
    [209,169],[169,195,161],[195,185,180,208],[187,180],[180,197],[197,209,178,220],[209,198,192,232],[198,174,163],[174,186,164],[186,166],
    [166,158,154,180],[159,161],[160,151],[151,150,134],[150,173,138],[173,206,163],[206,212],[211,262,189],[261,259,224],[260,271,245],
    [271,299],[299,278],[278,238,235],[238,243,216],[243,255],[255,309,254,360],[309,272,262,332],[272,298],[298,337],[337,383],
    [383,411,363],[411,402,366,427],[402,366],[366,406],[406,440,400,462],[440,463,422],[463,424],[424,439],[438,375,370,458],[375,406,364],
    [405,432,378,437],[432,446],[446,465,440,473],[465,432,430,487],[432,376],[377,375,366],[375,417,367,432],[417,396],[396,427],[427,450,400],
    [450,492,428],[492,497,470,508],[497,484,480,519],[484,461,456,505],[461,412,408,514],[415,408,386],[408,396],[396,405],[405,393,378],[393,402,370],
    [402,396,384],[396,400,384,425],[400,402,396,415],[401,395],[400,364,360],[364,372,352],[372,400,359],[400,376],[376,403],[403,423],
    [422,434],[434,426,400],[426,438],[438,462],[462,414,412,468],[414,428,410],[428,441,416],[441,450,432,460],[450,447,444,460],[454,445,438,462],
    [450,438,426],[438,428],[430,396],[396,391,386],[391,402,389,414],[402,390,384],[401,386],[386,385],[385,363],[363,364,352],
    [364,326],[326,315],[315,284],[284,276,270],[276,288,264],[288,283],[283,298],[298,297,288],[297,287],[287,285,276],
    [285,282,276],[283,257],[257,255,243],[255,285],[285,264],[264,253],[253,227],[227,238],[238,246,234,254],[246,233],
    [233,226,219],[226,235],[235,257],[257,262,250,267],[262,261,256,268],[262,244,242],[246,243],[243,258],[258,251],[251,272],
    [272,250],[250,238],[238,202],[202,192],[191,195],[195,189,185],[188,210,186,228],[210,226,192],[226,210],[209,212],
    [211,212,208,216],[211,205],[204,206],[205,209],[208,209],[209,207],[210,206,203],[206,210],[209,208],[209,188,188,217],
    [188,203],[203,201],[201,208],[208,216,208,221],[216,210],[210,213,208,219],[213,195,190],[203,192,186],[202,192,183],[192,213,187]
];

function rect(x, top, w, bottom, cls) {
    const r = document.createElementNS(NS, 'rect');
    r.setAttribute('x', x);
    r.setAttribute('y', top);
    r.setAttribute('width', w);
    r.setAttribute('height', Math.max(1, bottom - top));
    r.setAttribute('class', cls);
    document.querySelector('#candles').appendChild(r);
}

function label(parent, x, y, txt) {
    const t = document.createElementNS(NS, 'text');
    t.setAttribute('x', x);
    t.setAttribute('y', y);
    t.textContent = txt;
    document.querySelector(parent).appendChild(t);
}

bars.forEach(function (b, i) {
    const x = 43.5 + i * 2.743;
    const top = Math.min(b[0], b[1]);
    const bottom = Math.max(b[0], b[1]);
    const side = b[1] <= b[0] ? 'bull' : 'bear';
    rect(x - 0.5, b[2] || top - 2 - i % 3, 1, b[3] || bottom + 1 + i % 4, side + ' wick');
    rect(x - 1, top, 2, bottom, side);
});

//time axis, the empty one is under the date tag
['22:30', '23', '01:30', '03:00', '04:30', '06:00', '07:30', '09:00', '10:30', '12:00', '13:30', '15:00', '16:30', '18:00', '19:30', '21:00', '22:30', '', '01:30', '03:00', '04:30', '06:00', '07:30', '09:15'].forEach(function (t, i) {
    label('#times', 83 + i * 49.4, 632, t);
});

//price axis
[['1,18050', 105], ['1,18000', 156], ['1,17900', 256], ['1,17850', 307], ['1,17800', 357], ['1,17750', 408], ['1,17650', 509], ['1,17600', 559], ['1,17550', 609]].forEach(function (p) {
    label('#prices', 1252, p[1] + 3, p[0]);
});
```
